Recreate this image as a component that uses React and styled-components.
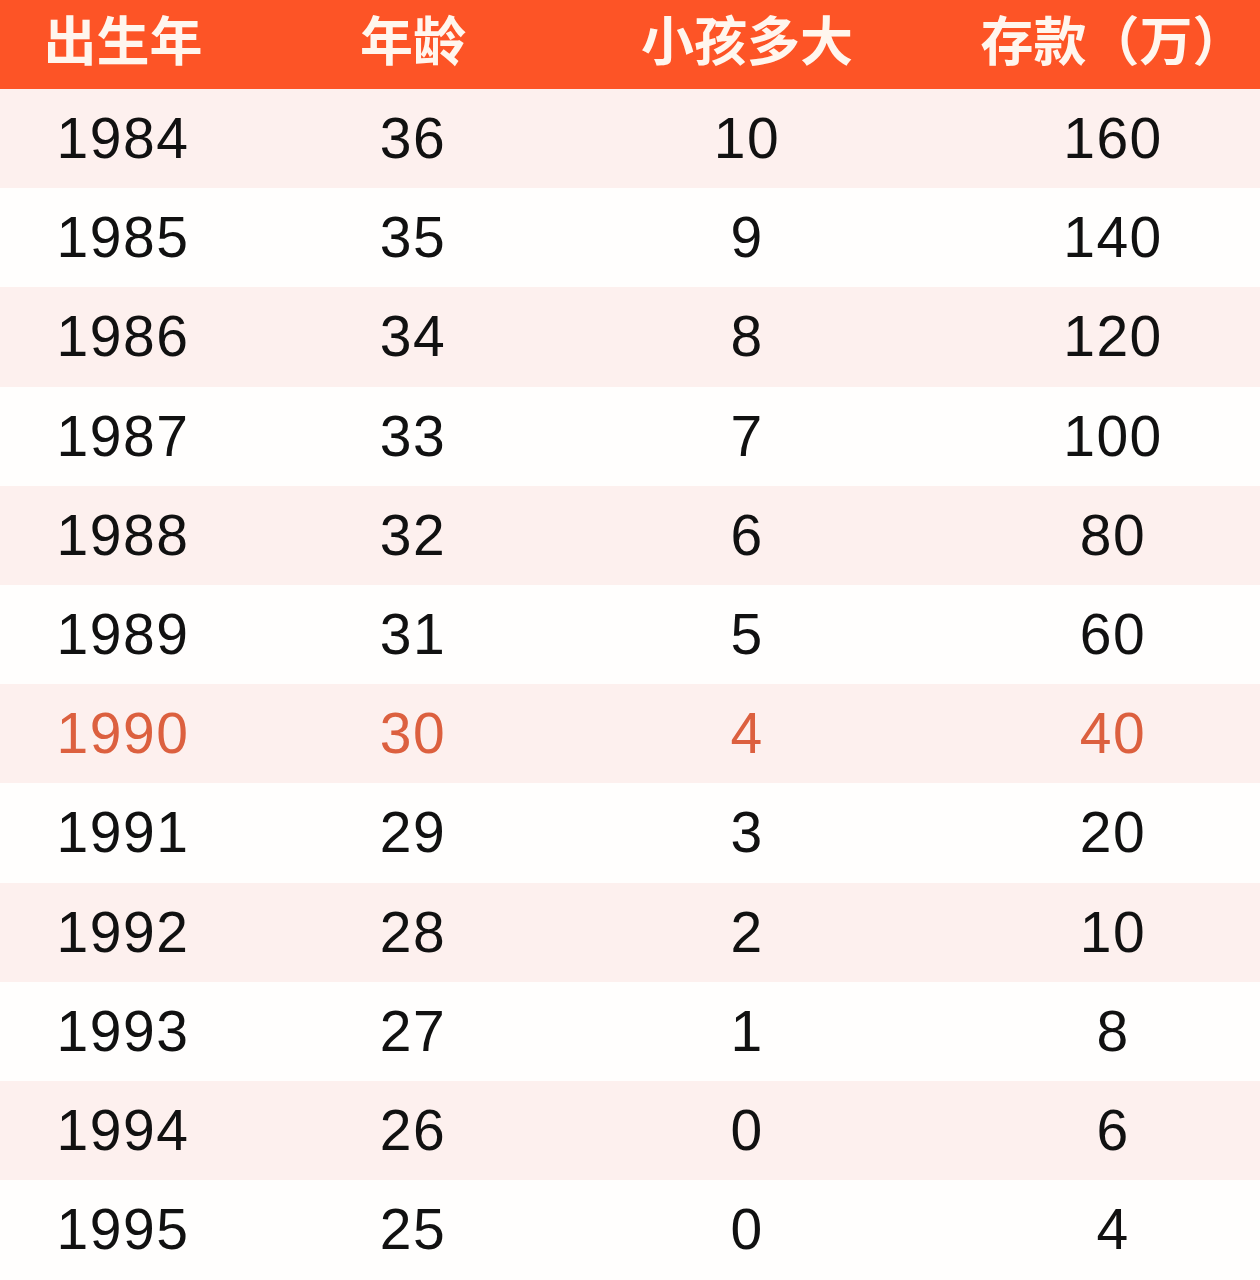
import React from "react";
import styled, { createGlobalStyle } from "styled-components";

const rows = [
  ["1984", "36", "10", "160"],
  ["1985", "35", "9", "140"],
  ["1986", "34", "8", "120"],
  ["1987", "33", "7", "100"],
  ["1988", "32", "6", "80"],
  ["1989", "31", "5", "60"],
  ["1990", "30", "4", "40"],
  ["1991", "29", "3", "20"],
  ["1992", "28", "2", "10"],
  ["1993", "27", "1", "8"],
  ["1994", "26", "0", "6"],
  ["1995", "25", "0", "4"],
];

const headers = ["出生年", "年龄", "小孩多大", "存款（万）"];

// 1990 is the highlighted year
const HIGHLIGHT = "1990";

const App = () => {
  return (
    <>
      <GlobalStyle />
      <StTable>
        {/* -------------- Header -------------- */}
        <StHeaderRow>
          {headers.map((h) => (
            <StHeaderCell key={h}>{h}</StHeaderCell>
          ))}
        </StHeaderRow>
        {/* -------------- Body -------------- */}
        {rows.map((row, i) => (
          <StRow key={row[0]} $striped={i % 2 === 0}>
            {row.map((cell, j) => (
              <StCell key={j} $hot={row[0] === HIGHLIGHT}>
                {cell}
              </StCell>
            ))}
          </StRow>
        ))}
      </StTable>
    </>
  );
};

export default App;

const GlobalStyle = createGlobalStyle`
  html, body {
    margin: 0;
    padding: 0;
    background: #fffefd;
  }
`;

const StTable = styled.div`
  width: 1260px;
  height: 1280px;
  overflow: hidden;
  background: #fffefd;
`;

const columns = `
  display: grid;
  grid-template-columns: 246px 334px 334px 1fr;
  & > :last-child {
    padding-left: 52px;
  }
`;

const StHeaderRow = styled.div`
  ${columns}
  height: 89px;
  background-color: #fd5426;
  align-items: center;
`;

const StHeaderCell = styled.div`
  text-align: center;
  font-family: "Noto Sans CJK SC", "Noto Sans", sans-serif;
  font-weight: 700;
  font-size: 53px;
  line-height: 1;
  color: #fff6ee;
  padding-bottom: 12px;
  white-space: nowrap;
`;

const StRow = styled.div`
  ${columns}
  height: 99.2px;
  align-items: center;
  background-color: ${(p) => (p.$striped ? "#fdf0ee" : "#fffefd")};
`;

const StCell = styled.div`
  text-align: center;
  font-family: "Liberation Sans", Arial, sans-serif;
  font-size: 57px;
  letter-spacing: 1.5px;
  line-height: 1;
  color: ${(p) => (p.$hot ? "#dc603f" : "#111111")};
`;
